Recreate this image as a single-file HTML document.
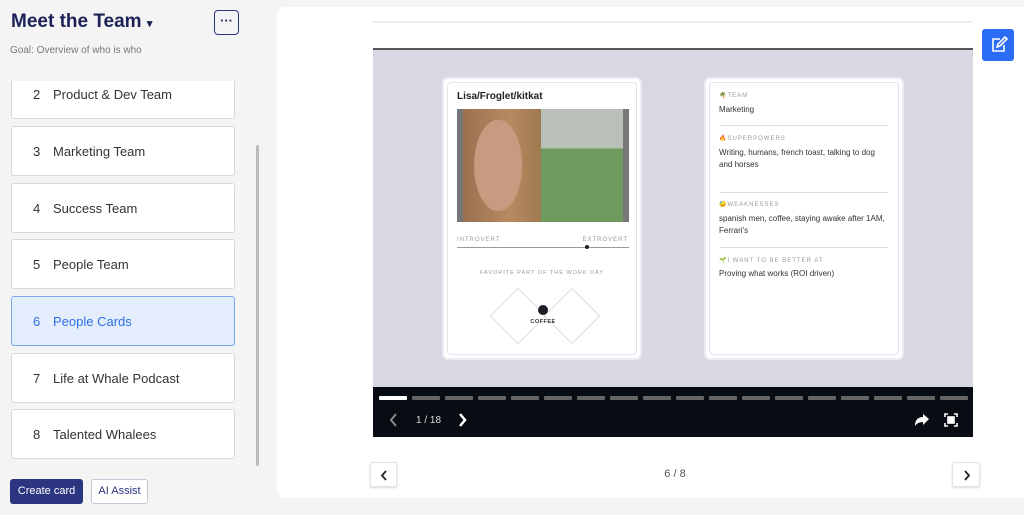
<!DOCTYPE html>
<html><head><style>
*{box-sizing:border-box;margin:0;padding:0}
body{width:1024px;height:515px;background:#f4f4f5;font-family:"Liberation Sans",sans-serif;position:relative;overflow:hidden}
.a{position:absolute}
.item{position:absolute;left:11px;width:224px;height:50px;background:#fff;border:1px solid #d6d8de;border-radius:3px;font-size:13px;color:#333;padding-left:21px;line-height:50px}
.item b{font-weight:normal;display:inline-block;width:20px}
.sel{background:#e3edfc;border-color:#7aa7f0;color:#2f6fe6}
.lbl{font-size:6px;letter-spacing:1px;color:#999}
.txt{font-size:8px;color:#333;line-height:12px}
.hr{position:absolute;left:14px;right:14px;height:1px;background:#ddd}
.seg{position:absolute;top:396px;width:28px;height:4px;border-radius:1px;background:#666}
</style></head><body>
<div class="a" style="left:11px;top:11px;font-size:19px;font-weight:bold;color:#1c2257">Meet the Team <span style="font-size:11px">▾</span></div>
<div class="a" style="left:214px;top:10px;width:25px;height:25px;border:1px solid #2b3580;border-radius:4px;text-align:center;line-height:20px;font-weight:bold;color:#1c2257;font-size:13px">···</div>
<div class="a" style="left:10px;top:45px;font-size:10px;color:#777">Goal: Overview of who is who</div>
<div class="a" style="left:0;top:81px;width:250px;height:385px;overflow:hidden">
<div class="item" style="top:-12px"><b>2</b>Product &amp; Dev Team</div>
<div class="item" style="top:45px"><b>3</b>Marketing Team</div>
<div class="item" style="top:102px"><b>4</b>Success Team</div>
<div class="item" style="top:158px"><b>5</b>People Team</div>
<div class="item sel" style="top:215px"><b>6</b>People Cards</div>
<div class="item" style="top:272px"><b>7</b>Life at Whale Podcast</div>
<div class="item" style="top:328px"><b>8</b>Talented Whalees</div>
</div>
<div class="a" style="left:256px;top:145px;width:3px;height:321px;background:#bbb;border-radius:2px"></div>
<div class="a" style="left:10px;top:479px;width:73px;height:25px;background:#2b3580;border-radius:3px;color:#fff;font-size:11px;text-align:center;line-height:25px">Create card</div>
<div class="a" style="left:91px;top:479px;width:57px;height:25px;border:1px solid #c5c8d6;border-radius:3px;color:#2b3580;font-size:11px;text-align:center;line-height:23px;background:#fff">AI Assist</div>

<div class="a" style="left:277px;top:7px;width:760px;height:491px;background:#fff;border-radius:8px"></div>
<div class="a" style="left:373px;top:21px;width:600px;height:2px;background:#eee"></div>
<div class="a" style="left:373px;top:48px;width:600px;height:2px;background:#555"></div>
<div class="a" style="left:373px;top:50px;width:600px;height:337px;background:#d8d8e3"></div>
<div class="a" style="left:982px;top:29px;width:32px;height:32px;background:#2a6df4;border-radius:3px">
<svg width="32" height="32" viewBox="0 0 32 32" fill="none" stroke="#fff" stroke-width="1.6"><path d="M18 10h-7v12h11v-6"/><path d="M15 18l1-3 7-7 2 2-7 7z"/></svg></div>

<div class="a" style="left:442px;top:77px;width:200px;height:283px;background:#fff;border-radius:6px;border:2px solid #eceaf2">
<div class="a" style="left:3px;top:3px;right:3px;bottom:3px;border:1px solid #e4e4ea;border-radius:4px"></div>
<div class="a" style="left:13px;top:12px;font-size:10px;font-weight:bold;color:#222">Lisa/Froglet/kitkat</div>
<div class="a" style="left:13px;top:30px;width:172px;height:113px;background:linear-gradient(180deg,#b8c0b8 0 35%,#6f9a5e 35%)"></div>
<div class="a" style="left:13px;top:30px;width:6px;height:113px;background:#777"></div>
<div class="a" style="left:179px;top:30px;width:6px;height:113px;background:#777"></div>
<div class="a" style="left:19px;top:30px;width:78px;height:113px;background:radial-gradient(ellipse 38% 50% at 45% 50%,#c99a80 0 80%,transparent 82%),linear-gradient(90deg,#9a7050,#b88a60 60%,#a07a50)"></div>
<div class="a lbl" style="left:13px;top:158px">INTROVERT</div>
<div class="a lbl" style="right:12px;top:158px">EXTROVERT</div>
<div class="a" style="left:13px;top:168px;width:172px;height:1px;background:#999"></div>
<div class="a" style="left:141px;top:166px;width:4px;height:4px;border-radius:50%;background:#222"></div>
<div class="a lbl" style="left:0;width:196px;text-align:center;top:191px;font-size:5.5px">FAVORITE PART OF THE WORK DAY</div>
<div class="a" style="left:54px;top:217px;width:40px;height:40px;border:1px solid #ddd;transform:rotate(45deg)"></div>
<div class="a" style="left:108px;top:217px;width:40px;height:40px;border:1px solid #ddd;transform:rotate(45deg)"></div>
<div class="a" style="left:94px;top:226px;width:10px;height:10px;border-radius:50%;background:#1a1d24"></div>
<div class="a" style="left:0;width:198px;text-align:center;top:240px;font-size:5.5px;font-weight:bold;color:#333;letter-spacing:.5px">COFFEE</div>
</div>

<div class="a" style="left:704px;top:77px;width:200px;height:283px;background:#fff;border-radius:6px;border:2px solid #eceaf2">
<div class="a" style="left:3px;top:3px;right:3px;bottom:3px;border:1px solid #e4e4ea;border-radius:4px"></div>
<div class="a lbl" style="left:13px;top:13px">🌴TEAM</div>
<div class="a txt" style="left:13px;top:25px">Marketing</div>
<div class="hr" style="top:46px"></div>
<div class="a lbl" style="left:13px;top:56px">🔥SUPERPOWERS</div>
<div class="a txt" style="left:13px;top:68px;width:170px">Writing, humans, french toast, talking to dog and horses</div>
<div class="hr" style="top:113px"></div>
<div class="a lbl" style="left:13px;top:122px">😓WEAKNESSES</div>
<div class="a txt" style="left:13px;top:134px;width:170px">spanish men, coffee, staying awake after 1AM, Ferrari's</div>
<div class="hr" style="top:168px"></div>
<div class="a lbl" style="left:13px;top:178px">🌱I WANT TO BE BETTER AT</div>
<div class="a txt" style="left:13px;top:189px">Proving what works (ROI driven)</div>
</div>

<div class="a" style="left:373px;top:387px;width:600px;height:50px;background:#080d13"></div>
<div class="seg" style="left:379px;background:#fff"></div>
<div class="seg" style="left:412px"></div><div class="seg" style="left:445px"></div><div class="seg" style="left:478px"></div><div class="seg" style="left:511px"></div><div class="seg" style="left:544px"></div><div class="seg" style="left:577px"></div><div class="seg" style="left:610px"></div><div class="seg" style="left:643px"></div><div class="seg" style="left:676px"></div><div class="seg" style="left:709px"></div><div class="seg" style="left:742px"></div><div class="seg" style="left:775px"></div><div class="seg" style="left:808px"></div><div class="seg" style="left:841px"></div><div class="seg" style="left:874px"></div><div class="seg" style="left:907px"></div><div class="seg" style="left:940px"></div>
<svg class="a" style="left:389px;top:413px" width="10" height="14" fill="none" stroke="#888" stroke-width="2"><path d="M7 1L2 7l5 6"/></svg>
<div class="a" style="left:416px;top:415px;font-size:10px;color:#ddd">1 / 18</div>
<svg class="a" style="left:458px;top:413px" width="10" height="14" fill="none" stroke="#fff" stroke-width="2.5"><path d="M2 1l5 6-5 6"/></svg>
<svg class="a" style="left:914px;top:413px" width="16" height="14"><path d="M15 6L9 1v3C4 4 1 7 1 13c2-3 5-4 8-4v3z" fill="#fff"/></svg>
<svg class="a" style="left:944px;top:413px" width="14" height="14" fill="none" stroke="#fff" stroke-width="1.6"><path d="M1 4V1h3M10 1h3v3M13 10v3h-3M4 13H1v-3"/><rect x="4" y="4" width="6" height="6" fill="#fff"/></svg>

<div class="a" style="left:370px;top:462px;width:27px;height:25px;background:#fff;border:1px solid #e3e3e3;border-radius:2px;box-shadow:0 1px 2px rgba(0,0,0,.15)"><svg width="27" height="25" fill="none" stroke="#222" stroke-width="1.8"><path d="M15 8l-4 4.5 4 4.5"/></svg></div>
<div class="a" style="left:952px;top:462px;width:28px;height:25px;background:#fff;border:1px solid #e3e3e3;border-radius:2px;box-shadow:0 1px 2px rgba(0,0,0,.15)"><svg width="28" height="25" fill="none" stroke="#222" stroke-width="1.8"><path d="M12 8l4 4.5-4 4.5"/></svg></div>
<div class="a" style="left:650px;top:468px;width:50px;text-align:center;font-size:11px;color:#555">6 / 8</div>
</body></html>
